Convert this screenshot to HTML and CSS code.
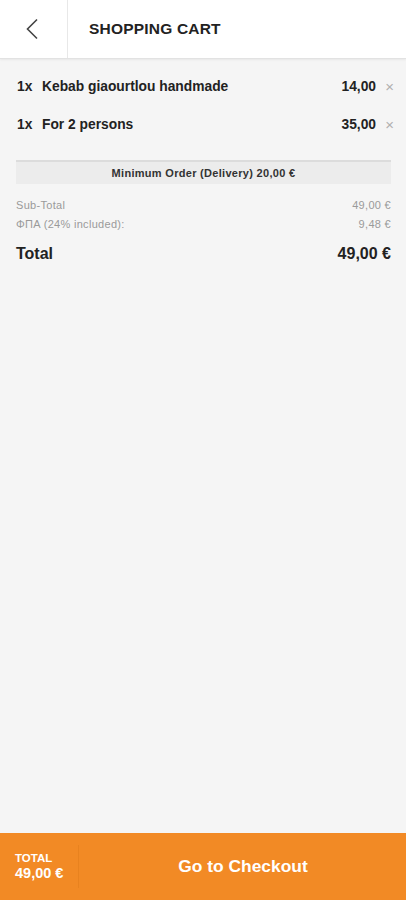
FILE: index.html
```html
<!DOCTYPE html>
<html>
<head>
<meta charset="utf-8">
<link rel="stylesheet" href="styles.css">
</head>
<body>
<div class="app">
  <header class="header">
    <div class="back">
      <svg width="14" height="22" viewBox="0 0 14 22"><path d="M12 1.5 L2.5 11 L12 20.5" fill="none" stroke="#444" stroke-width="1.6"/></svg>
    </div>
    <div class="title">SHOPPING CART</div>
  </header>
  <main class="content">
    <div class="items">
      <div class="item">
        <span class="qty">1x</span>
        <span class="name">Kebab giaourtlou handmade</span>
        <span class="price">14,00</span>
        <span class="remove">×</span>
      </div>
      <div class="item">
        <span class="qty">1x</span>
        <span class="name">For 2 persons</span>
        <span class="price">35,00</span>
        <span class="remove">×</span>
      </div>
    </div>
    <div class="minorder">Minimum Order (Delivery) 20,00 €</div>
    <div class="sums">
      <div class="sum"><span>Sub-Total</span><span>49,00 €</span></div>
      <div class="sum"><span>ΦΠΑ (24% included):</span><span>9,48 €</span></div>
    </div>
    <div class="total"><span>Total</span><span>49,00 €</span></div>
  </main>
  <footer class="footer">
    <div class="ftotal">
      <div class="flabel">TOTAL</div>
      <div class="famount">49,00 €</div>
    </div>
    <div class="checkout">Go to Checkout</div>
  </footer>
</div>
</body>
</html>
```
FILE: styles.css
```css
* { box-sizing: border-box; }
html, body { margin: 0; padding: 0; }
body {
  font-family: "Liberation Sans", Arial, sans-serif;
  background: #f5f5f5;
  color: #222;
}
.app {
  width: 406px;
  height: 900px;
  display: flex;
  flex-direction: column;
}
.header {
  height: 59px;
  background: #fff;
  display: flex;
  align-items: stretch;
  border-bottom: 1px solid #e2e2e2;
  box-shadow: 0 1px 2px rgba(0,0,0,0.06);
  flex-shrink: 0;
}
.back {
  width: 68px;
  display: flex;
  align-items: center;
  justify-content: center;
  border-right: 1px solid #e8e8e8;
  padding-right: 4px;
  padding-bottom: 1px;
}
.title {
  display: flex;
  align-items: center;
  padding-left: 21px;
  font-weight: bold;
  font-size: 15.5px;
  color: #222;
  letter-spacing: 0.2px;
}
.content {
  flex: 1;
  padding: 0 15px 0 16px;
}
.items {
  padding-top: 8px;
  padding-bottom: 17px;
}
.item {
  display: flex;
  align-items: center;
  height: 38px;
  font-size: 13.8px;
  font-weight: bold;
  color: #222;
  padding-left: 1px;
  margin-right: -3px;
}
.qty { width: 25px; }
.name { flex: 1; }
.remove {
  width: 18px;
  text-align: right;
  font-weight: normal;
  color: #b0b0b0;
  font-size: 15px;
}
.minorder {
  border-top: 2px solid #dcdcdc;
  background: #ececec;
  height: 24px;
  display: flex;
  align-items: center;
  justify-content: center;
  font-size: 11px;
  letter-spacing: 0.3px;
  font-weight: bold;
  color: #333;
}
.sums {
  padding-top: 11px;
}
.sum {
  display: flex;
  justify-content: space-between;
  font-size: 11px;
  letter-spacing: 0.3px;
  color: #9a9a9a;
  height: 19px;
  align-items: center;
}
.total {
  display: flex;
  justify-content: space-between;
  font-size: 16px;
  font-weight: bold;
  color: #222;
  margin-top: 12px;
}
.footer {
  height: 67px;
  background: #f28a25;
  display: flex;
  align-items: stretch;
  flex-shrink: 0;
  color: #fff;
}
.ftotal {
  width: 79px;
  padding-left: 15px;
  display: flex;
  flex-direction: column;
  justify-content: center;
  border-right: 1px solid #e8821f;
  margin: 12px 0;
  font-weight: bold;
}
.flabel { font-size: 11.5px; line-height: 13px; }
.famount { font-size: 14.5px; line-height: 16px; }
.checkout {
  flex: 1;
  display: flex;
  align-items: center;
  justify-content: center;
  font-size: 17.4px;
  font-weight: bold;
  padding-left: 1px;
}
```
